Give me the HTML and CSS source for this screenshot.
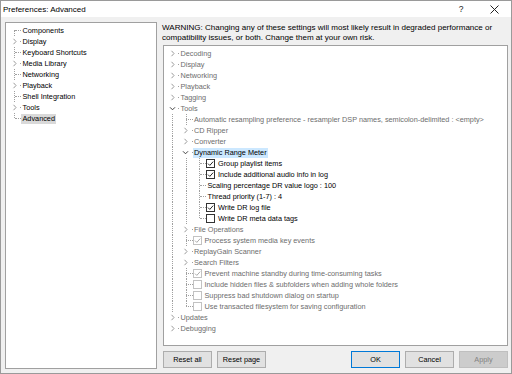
FILE: index.html
```html
<!DOCTYPE html>
<html lang="en">
<head>
    <meta charset="UTF-8">
    <title>Preferences: Advanced</title>
    <link rel="stylesheet" href="styles.css">
</head>
<body>
    <div class="window">
        <div class="titlebar">
            <span class="title">Preferences: Advanced</span>
            <span class="help">?</span>
            <span class="close">
                <svg width="9" height="9" viewBox="0 0 9 9"><path d="M0.5 0.5 L8.5 8.5 M8.5 0.5 L0.5 8.5" stroke="#222" stroke-width="1" fill="none"/></svg>
            </span>
        </div>

        <div class="content">
            <!-- page list -->
            <div class="tree pages">
                <div class="row"><span class="c first"></span><span class="t">Components</span></div>
                <div class="row"><span class="c"><i class="exp"><svg viewBox="0 0 7 7"><path d="M2.5 0.8 L5 3.5 L2.5 6.2"/></svg></i></span><span class="t">Display</span></div>
                <div class="row"><span class="c"></span><span class="t">Keyboard Shortcuts</span></div>
                <div class="row"><span class="c"><i class="exp"><svg viewBox="0 0 7 7"><path d="M2.5 0.8 L5 3.5 L2.5 6.2"/></svg></i></span><span class="t">Media Library</span></div>
                <div class="row"><span class="c"></span><span class="t">Networking</span></div>
                <div class="row"><span class="c"><i class="exp"><svg viewBox="0 0 7 7"><path d="M2.5 0.8 L5 3.5 L2.5 6.2"/></svg></i></span><span class="t">Playback</span></div>
                <div class="row"><span class="c"></span><span class="t">Shell Integration</span></div>
                <div class="row"><span class="c"><i class="exp"><svg viewBox="0 0 7 7"><path d="M2.5 0.8 L5 3.5 L2.5 6.2"/></svg></i></span><span class="t">Tools</span></div>
                <div class="row"><span class="c last"></span><span class="t picked">Advanced</span></div>
            </div>

            <div class="main">
                <p class="warning">WARNING: Changing any of these settings will most likely result in degraded performance or<br>compatibility issues, or both. Change them at your own risk.</p>

                <div class="tree advanced">
                    <div class="row"><span class="c first"><i class="exp"><svg viewBox="0 0 7 7"><path d="M2.5 0.8 L5 3.5 L2.5 6.2"/></svg></i></span><span class="t">Decoding</span></div>
                    <div class="row"><span class="c"><i class="exp"><svg viewBox="0 0 7 7"><path d="M2.5 0.8 L5 3.5 L2.5 6.2"/></svg></i></span><span class="t">Display</span></div>
                    <div class="row"><span class="c"><i class="exp"><svg viewBox="0 0 7 7"><path d="M2.5 0.8 L5 3.5 L2.5 6.2"/></svg></i></span><span class="t">Networking</span></div>
                    <div class="row"><span class="c"><i class="exp"><svg viewBox="0 0 7 7"><path d="M2.5 0.8 L5 3.5 L2.5 6.2"/></svg></i></span><span class="t">Playback</span></div>
                    <div class="row"><span class="c"><i class="exp"><svg viewBox="0 0 7 7"><path d="M2.5 0.8 L5 3.5 L2.5 6.2"/></svg></i></span><span class="t">Tagging</span></div>
                    <div class="row"><span class="c"><i class="exp open"><svg viewBox="0 0 7 7"><path d="M1 2.3 L3.5 4.8 L6 2.3"/></svg></i></span><span class="t">Tools</span></div>

                    <div class="row"><span class="g v"></span><span class="c"></span><span class="t">Automatic resampling preference - resampler DSP names, semicolon-delimited : &lt;empty&gt;</span></div>
                    <div class="row"><span class="g v"></span><span class="c"><i class="exp"><svg viewBox="0 0 7 7"><path d="M2.5 0.8 L5 3.5 L2.5 6.2"/></svg></i></span><span class="t">CD Ripper</span></div>
                    <div class="row"><span class="g v"></span><span class="c"><i class="exp"><svg viewBox="0 0 7 7"><path d="M2.5 0.8 L5 3.5 L2.5 6.2"/></svg></i></span><span class="t">Converter</span></div>
                    <div class="row"><span class="g v"></span><span class="c"><i class="exp open"><svg viewBox="0 0 7 7"><path d="M1 2.3 L3.5 4.8 L6 2.3"/></svg></i></span><span class="t on selected">Dynamic Range Meter</span></div>

                    <div class="row"><span class="g v"></span><span class="g v"></span><span class="c"></span><span class="cb on"><svg viewBox="0 0 7 7"><path d="M1 3.6 L2.8 5.4 L6.2 1.6"/></svg></span><span class="t on">Group playlist items</span></div>
                    <div class="row"><span class="g v"></span><span class="g v"></span><span class="c"></span><span class="cb on"><svg viewBox="0 0 7 7"><path d="M1 3.6 L2.8 5.4 L6.2 1.6"/></svg></span><span class="t on">Include additional audio info in log</span></div>
                    <div class="row"><span class="g v"></span><span class="g v"></span><span class="c"></span><span class="t on">Scaling percentage DR value logo : 100</span></div>
                    <div class="row"><span class="g v"></span><span class="g v"></span><span class="c"></span><span class="t on">Thread priority (1-7) : 4</span></div>
                    <div class="row"><span class="g v"></span><span class="g v"></span><span class="c"></span><span class="cb on"><svg viewBox="0 0 7 7"><path d="M1 3.6 L2.8 5.4 L6.2 1.6"/></svg></span><span class="t on">Write DR log file</span></div>
                    <div class="row"><span class="g v"></span><span class="g v"></span><span class="c last"></span><span class="cb on"></span><span class="t on">Write DR meta data tags</span></div>

                    <div class="row"><span class="g v"></span><span class="c"><i class="exp"><svg viewBox="0 0 7 7"><path d="M2.5 0.8 L5 3.5 L2.5 6.2"/></svg></i></span><span class="t">File Operations</span></div>
                    <div class="row"><span class="g v"></span><span class="c"></span><span class="cb"><svg viewBox="0 0 7 7"><path d="M1 3.6 L2.8 5.4 L6.2 1.6"/></svg></span><span class="t">Process system media key events</span></div>
                    <div class="row"><span class="g v"></span><span class="c"><i class="exp"><svg viewBox="0 0 7 7"><path d="M2.5 0.8 L5 3.5 L2.5 6.2"/></svg></i></span><span class="t">ReplayGain Scanner</span></div>
                    <div class="row"><span class="g v"></span><span class="c"><i class="exp"><svg viewBox="0 0 7 7"><path d="M2.5 0.8 L5 3.5 L2.5 6.2"/></svg></i></span><span class="t">Search Filters</span></div>
                    <div class="row"><span class="g v"></span><span class="c"></span><span class="cb"><svg viewBox="0 0 7 7"><path d="M1 3.6 L2.8 5.4 L6.2 1.6"/></svg></span><span class="t">Prevent machine standby during time-consuming tasks</span></div>
                    <div class="row"><span class="g v"></span><span class="c"></span><span class="cb"></span><span class="t">Include hidden files &amp; subfolders when adding whole folders</span></div>
                    <div class="row"><span class="g v"></span><span class="c"></span><span class="cb"></span><span class="t">Suppress bad shutdown dialog on startup</span></div>
                    <div class="row"><span class="g v"></span><span class="c last"></span><span class="cb"></span><span class="t">Use transacted filesystem for saving configuration</span></div>

                    <div class="row"><span class="c"><i class="exp"><svg viewBox="0 0 7 7"><path d="M2.5 0.8 L5 3.5 L2.5 6.2"/></svg></i></span><span class="t">Updates</span></div>
                    <div class="row"><span class="c last"><i class="exp"><svg viewBox="0 0 7 7"><path d="M2.5 0.8 L5 3.5 L2.5 6.2"/></svg></i></span><span class="t">Debugging</span></div>
                </div>

                <div class="buttons">
                    <button class="btn">Reset all</button>
                    <button class="btn">Reset page</button>
                    <span class="spacer"></span>
                    <button class="btn default">OK</button>
                    <button class="btn">Cancel</button>
                    <button class="btn" disabled>Apply</button>
                </div>
            </div>
        </div>
    </div>
</body>
</html>
```

FILE: styles.css
```css
html, body {
    margin: 0;
    padding: 0;
}
body {
    font-family: "Liberation Sans", Arial, sans-serif;
    font-size: 7.3px;
    color: #000;
    background-color: #f0f0f0;
}
.window {
    width: 512px;
    height: 374px;
    box-sizing: border-box;
    border: 1px solid #9a9a9a;
    background-color: #f0f0f0;
    display: flex;
    flex-direction: column;
}
.titlebar {
    height: 16px;
    flex: none;
    background-color: #fff;
    display: flex;
    align-items: center;
    padding-left: 2px;
}
.title {
    font-size: 8px;
    flex: 1;
}
.help {
    font-size: 8.5px;
    color: #222;
    width: 34px;
    text-align: center;
}
.close {
    width: 32px;
    display: flex;
    justify-content: center;
    margin-right: 1px;
}
.content {
    flex: 1;
    display: flex;
    gap: 6px;
    padding: 5px 0 0 4px;
}
.main {
    width: 345px;
    display: flex;
    flex-direction: column;
    padding-top: 1px;
}
.warning {
    margin: 0 0 2px -1px;
    font-size: 8.05px;
    line-height: 10px;
    height: 20px;
    white-space: nowrap;
}

/* tree views */
.tree {
    background-color: #fff;
    border: 1px solid #a0a0a0;
    box-sizing: border-box;
    overflow: hidden;
    color: #6d6d6d;
    padding: 2px 0 0 1.5px;
}
.pages {
    width: 152px;
    height: 347px;
    color: #000;
}
.advanced {
    height: 301px;
}
.row {
    display: flex;
    align-items: center;
    height: 11px;
    white-space: nowrap;
}
.g, .c {
    position: relative;
    flex: none;
    width: 13.5px;
    height: 11px;
}
.g.v::before, .c::before {
    content: "";
    position: absolute;
    left: 6.5px;
    top: 0;
    bottom: 0;
    border-left: 1px dotted #a0a0a0;
}
.c.first::before {
    top: 5px;
}
.c.last::before {
    bottom: 6px;
}
.c::after {
    content: "";
    position: absolute;
    left: 7px;
    right: 0;
    top: 5px;
    border-top: 1px dotted #a0a0a0;
}
/* expander covers the lines in its cell */
.exp {
    position: absolute;
    left: 1px;
    top: 0;
    width: 11px;
    height: 11px;
    background-color: #fff;
    z-index: 1;
    display: flex;
    align-items: center;
    justify-content: center;
}
.exp svg {
    width: 7px;
    height: 7px;
    fill: none;
    stroke: #9a9a9a;
    stroke-width: 1;
}
.exp.open svg {
    stroke: #404040;
}
.t {
    line-height: 10px;
    height: 10px;
    padding: 0 1.5px;
}
.t.on {
    color: #000;
}
.t.picked {
    background-color: #d9d9d9;
}
.t.selected {
    background-color: #cce8ff;
}
.cb {
    flex: none;
    width: 9px;
    height: 9px;
    box-sizing: border-box;
    border: 1px solid #c2c2c2;
    background-color: #fff;
    margin-right: 1.5px;
    display: flex;
}
.cb.on {
    border-color: #333;
}
.cb svg {
    width: 7px;
    height: 7px;
    fill: none;
    stroke: #a0a0a0;
    stroke-width: 0.9;
}
.cb.on svg {
    stroke: #111;
}

/* buttons */
.buttons {
    display: flex;
    gap: 5px;
    margin-top: 5px;
}
.spacer {
    flex: 1;
}
.btn {
    width: 49px;
    height: 17px;
    padding: 0;
    font-family: inherit;
    font-size: 7.3px;
    color: #000;
    background-color: #e1e1e1;
    border: 1px solid #adadad;
    border-radius: 0;
}
.btn.default {
    border-color: #0078d7;
}
.btn:disabled {
    background-color: #cccccc;
    border-color: #bfbfbf;
    color: #838383;
}
```
